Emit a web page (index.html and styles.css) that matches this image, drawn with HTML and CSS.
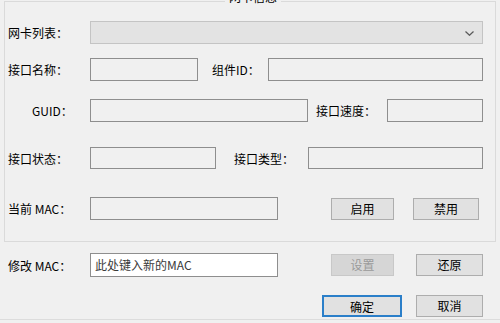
FILE: index.html
```html
<!DOCTYPE html>
<html>
<head>
<meta charset="utf-8">
<link rel="stylesheet" href="styles.css">
</head>
<body>
<div class="window">
  <div class="group">
    <div class="group-title">网卡信息</div>
    <div class="row r1">
      <span class="label">网卡列表：</span>
      <div class="combo"><svg class="chev" width="9" height="5" viewBox="0 0 9 5"><path d="M0.5 0.5 L4.5 4.3 L8.5 0.5" fill="none" stroke="#5a5a5a" stroke-width="1.2"/></svg></div>
    </div>
    <div class="row r2">
      <span class="label">接口名称：</span>
      <div class="field w108"></div>
      <span class="label2 ml14">组件ID：</span>
      <div class="field fill"></div>
    </div>
    <div class="row r3">
      <span class="label guid">GUID：</span>
      <div class="field w218"></div>
      <span class="label2 ml8">接口速度：</span>
      <div class="field fill"></div>
    </div>
    <div class="row r4">
      <span class="label">接口状态：</span>
      <div class="field w126"></div>
      <span class="label2 ml18">接口类型：</span>
      <div class="field fill"></div>
    </div>
    <div class="row r5">
      <span class="label">当前 MAC：</span>
      <div class="field w188"></div>
      <button class="btn b-enable">启用</button>
      <button class="btn b-disable">禁用</button>
    </div>
  </div>
  <div class="row r6">
    <span class="label">修改 MAC：</span>
    <div class="field edit w188">此处键入新的MAC</div>
    <button class="btn disabled b-set">设置</button>
    <button class="btn b-restore">还原</button>
  </div>
  <div class="row r7">
    <button class="btn default b-ok">确定</button>
    <button class="btn b-cancel">取消</button>
  </div>
</div>
</body>
</html>
```
FILE: styles.css
```css
html, body {
  margin: 0;
  padding: 0;
  background: #f0f0f0;
}
body {
  font-family: "Noto Sans CJK SC", "Noto Sans", sans-serif;
  font-size: 12px;
  color: #000;
}
.window {
  width: 500px;
  height: 320px;
  box-sizing: border-box;
  border-bottom: 1px solid #dcdcdc;
  overflow: hidden;
  position: relative;
}
.group {
  position: relative;
  margin: 1px 0 0 4px;
  width: 492px;
  height: 241px;
  box-sizing: border-box;
  border: 1px solid #dadada;
}
.group-title {
  position: absolute;
  top: -13px;
  left: 220px;
  padding: 0 4px;
  background: #f0f0f0;
  color: #000;
  font-size: 12px;
  line-height: 16px;
}
.row {
  display: flex;
  align-items: center;
  height: 23px;
  padding-right: 12px;
}
.label {
  width: 82px;
  padding-left: 3px;
  flex: none;
  white-space: nowrap;
}
.label.guid {
  width: 58px;
  padding-left: 27px;
}
.label2 {
  flex: none;
  white-space: nowrap;
}
.ml14 { margin-left: 14px; }
.ml8 { margin-left: 8px; }
.ml18 { margin-left: 18px; }
.r1 { margin-top: 19px; }
.r2 { margin-top: 14px; }
.r3 { margin-top: 18px; }
.r4 { margin-top: 25px; height: 22px; }
.r5 { margin-top: 28px; }
.combo {
  position: relative;
  flex: none;
  width: 393px;
  height: 23px;
  box-sizing: border-box;
  border: 1px solid #c4c4c4;
  background: #e3e3e3;
}
.chev {
  position: absolute;
  right: 8px;
  top: 9px;
}
.field {
  flex: none;
  height: 23px;
  box-sizing: border-box;
  border: 1px solid #8e8e8e;
  background: #f0f0f0;
}
.field.fill {
  margin-left: auto;
}
.r2 .field.fill { width: 215px; }
.r3 .field.fill { width: 96px; }
.r4 .field.fill { width: 175px; height: 22px; }
.r4 .field { height: 22px; }
.w108 { width: 108px; }
.w218 { width: 218px; }
.w126 { width: 126px; }
.w188 { width: 188px; }
.btn {
  flex: none;
  height: 22px;
  box-sizing: border-box;
  border: 1px solid #adadad;
  background: #e1e1e1;
  font-family: inherit;
  font-size: 12px;
  color: #000;
  padding: 0;
  margin: 0;
  line-height: 20px;
}
.btn.disabled {
  background: #d6d6d6;
  border-color: #c8c8c8;
  color: #9a9a9a;
}
.btn.default {
  border: 2px solid #2b7fc9;
}
.b-enable { width: 63px; margin-left: 53px; }
.b-disable { width: 66px; margin-left: 19px; }
.r6 {
  margin-top: 11px;
  padding-left: 5px;
  height: 24px;
  padding-right: 17px;
}
.r6 .field.edit {
  height: 24px;
  background: #ffffff;
  border-color: #8e8e8e;
  color: #3a3a3a;
  padding-left: 4px;
  line-height: 21px;
  white-space: nowrap;
}
.b-set { width: 63px; margin-left: 53px; }
.b-restore { width: 67px; margin-left: auto; }
.r7 {
  margin-top: 17px;
  justify-content: flex-end;
  padding-right: 17px;
}
.b-ok { width: 80px; }
.b-cancel { width: 67px; margin-left: 14px; }
```
